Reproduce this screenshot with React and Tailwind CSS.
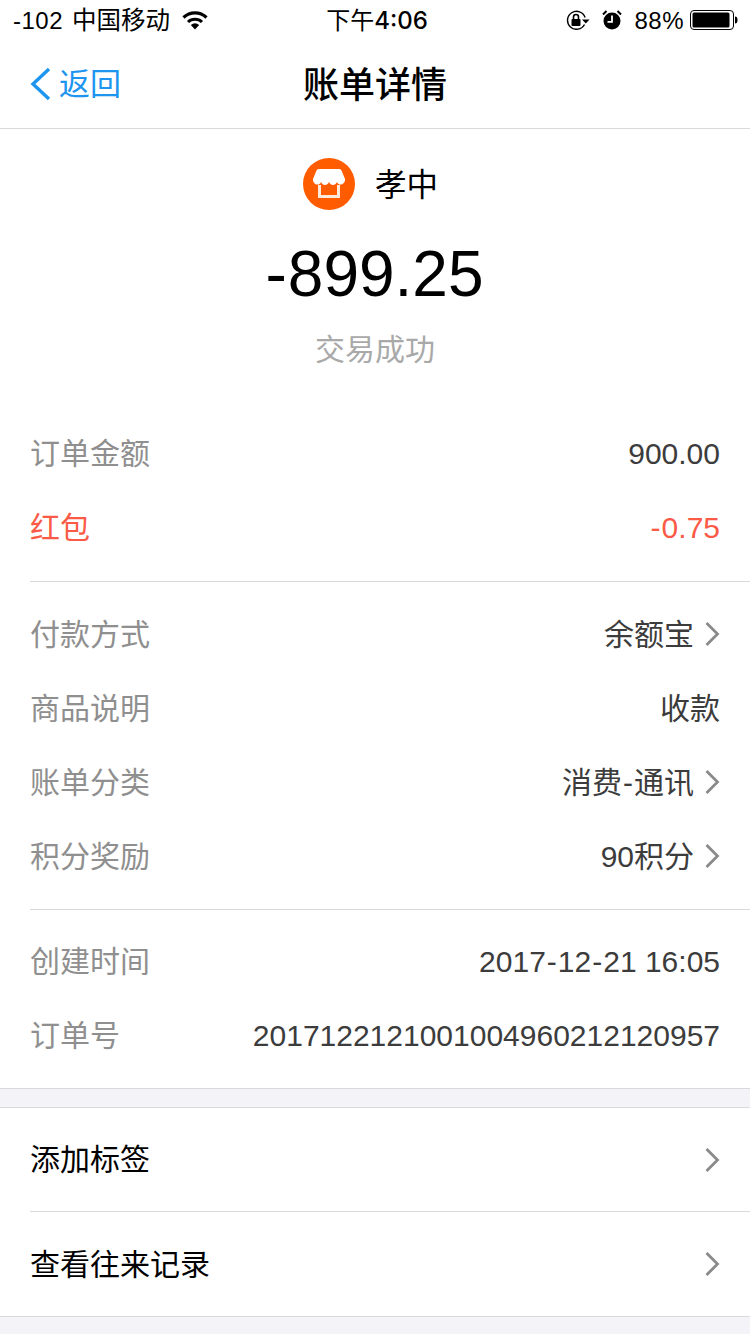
const FONT = "font-['Liberation_Sans','Noto_Sans_CJK_SC',sans-serif]";

const Arrow = () => (
  <svg width="15" height="26" viewBox="0 0 15 26" fill="none" aria-hidden="true">
    <path d="M1.500 2l11 11L1.500 24" stroke="#8a8a8a" strokeWidth="2.800" />
  </svg>
);

// the hyphen in the screenshot's font sits wider than the Liberation one
const Spaced = ({ text, gap = "mx-[1px]" }) =>
  text.split("-").map((part, i) => (
    <span key={i}>
      {i > 0 && <span className={gap}>-</span>}
      {part}
    </span>
  ));

const Row = ({ label, value, arrow, red }) => (
  <div className="flex h-[74px] items-center justify-between pr-[30px] text-[30px]">
    <span className={red ? "text-[#fb5a47]" : "text-[#8f8f8f]"}>{label}</span>
    <span className={`flex items-center gap-[11px] ${red ? "text-[#fb5a47]" : "text-[#3c3c3c]"}`}>
      <span className="whitespace-pre">
        <Spaced text={value} />
      </span>
      {arrow && <Arrow />}
    </span>
  </div>
);

const LinkRow = ({ label, className = "h-[103px]" }) => (
  <div className={`flex items-center justify-between pr-[30px] text-[30px] text-black ${className}`}>
    <span>{label}</span>
    <Arrow />
  </div>
);

const StatusBar = () => (
  <div className="flex h-[40px] items-center justify-between pl-[13px] pr-[12px] pt-[2px] text-[24px] leading-none text-black">
    <div className="flex w-[280px] items-center">
      <span className="tracking-[0.5px]">-102</span>
      <span className="ml-[9px] text-[24.500px]">中国移动</span>
      <svg width="26" height="20" viewBox="0 0 26 20" className="ml-[12px] -mt-[2px]" aria-hidden="true">
        <path d="M1.500 7.500a16.500 16.500 0 0 1 23 0" fill="none" stroke="#000" strokeWidth="3.200" />
        <path d="M6 12a10 10 0 0 1 14 0" fill="none" stroke="#000" strokeWidth="3" />
        <path d="M8.800 15a6.500 6.500 0 0 1 8.400 0L13 19.500z" fill="#000" />
      </svg>
    </div>
    <span className="flex items-center pl-[3px] text-[24px]">
      下午<span className="font-['Inter'] font-medium">4:06</span>
    </span>
    <div className="flex w-[280px] items-center justify-end">
      <svg width="24" height="20" viewBox="0 0 24 20" className="-mt-[2px]" aria-hidden="true">
        <path d="M18.500 14.500a9 9 0 1 1 .6-7" fill="none" stroke="#000" strokeWidth="1.400" />
        <path d="M16 9.500h7.500l-3.700 4z" fill="#000" />
        <rect x="5.500" y="9" width="9" height="7" rx="1" fill="#000" />
        <path d="M7.500 9V7a2.500 2.500 0 0 1 5 0v2" fill="none" stroke="#000" strokeWidth="1.600" />
      </svg>
      <svg width="20" height="20" viewBox="0 0 20 20" className="ml-[12px] -mt-[2px]" aria-hidden="true">
        <circle cx="10" cy="11" r="8.500" fill="#000" />
        <path d="M10 5.500V11.800H5.500" fill="none" stroke="#fff" strokeWidth="1.800" />
        <path d="M1 4.500L4.500 1M19 4.500L15.500 1" stroke="#000" strokeWidth="2" />
      </svg>
      <span className="ml-[12px] tracking-[0.5px]">88%</span>
      <svg width="48" height="20" viewBox="0 0 48 20" className="ml-[6px] -mt-[2px]" aria-hidden="true">
        <rect x="0.500" y="0.500" width="43" height="19" rx="3.500" fill="none" stroke="#000" />
        <rect x="2.500" y="2.500" width="37" height="15" rx="1.500" fill="#000" />
        <path d="M45 6.500c2 0 2.500 1.500 2.500 3.500s-.5 3.500-2.500 3.500z" fill="#000" />
      </svg>
    </div>
  </div>
);

export default function App() {
  return (
    <div className={`min-h-[1334px] overflow-hidden bg-[#f3f3f8] ${FONT}`}>
      <div className="border-b border-[#d9d9d9] bg-white">
        <StatusBar />
        <div className="relative flex h-[88px] items-center justify-center">
          <div className="absolute left-[30px] flex items-center text-[31px] text-[#1e96f0]">
            <svg width="22" height="34" viewBox="0 0 22 34" fill="none" aria-hidden="true">
              <path d="M19 2L3 17l16 15" stroke="#1e96f0" strokeWidth="3.400" />
            </svg>
            <span className="ml-[7px] pt-[2px]">返回</span>
          </div>
          <h1 className="pt-[4px] text-[36px] font-medium text-black">账单详情</h1>
        </div>
      </div>

      <div className="border-b border-[#d9d9d9] bg-white pb-[16px] pl-[30px]">
        <div className="-ml-[30px] flex flex-col items-center">
          <div className="mt-[29px] flex h-[52px] items-center pr-[9px]">
            <svg width="52" height="52" viewBox="0 0 52 52" aria-hidden="true">
              <circle cx="26" cy="26" r="26" fill="#ff5c00" />
              <path d="M16 11h20a2.500 2.500 0 0 1 2.500 1.500L42 21c.5 5-6 8-8 3-1.500 4-6.500 4-8 0-1.500 4-6.500 4-8 0-2 5-8.500 2-8-3l3.500-8.500A2.500 2.500 0 0 1 16 11z" fill="#fff" />
              <path d="M16.500 27v11.500h19V27" fill="none" stroke="#ffe9da" strokeWidth="3" />
            </svg>
            <span className="ml-[20px] pt-[4px] text-[31.500px] text-black">孝中</span>
          </div>
          <div className="mt-[27px] pr-[2px] text-[64px] leading-[74px] text-black">
            <Spaced text="-899.25" />
          </div>
          <div className="mt-[18px] text-[30px] leading-[42px] text-[#a9a9a9]">交易成功</div>
        </div>

        <div className="mt-[45px] border-b border-[#d9d9d9] pb-[17px]">
          <Row label="订单金额" value="900.00" />
          <Row label="红包" value="-0.75" red />
        </div>
        <div className="border-b border-[#d9d9d9] pb-[16px] pt-[15px]">
          <Row label="付款方式" value="余额宝" arrow />
          <Row label="商品说明" value="收款" />
          <Row label="账单分类" value="消费-通讯" arrow />
          <Row label="积分奖励" value="90积分" arrow />
        </div>
        <div className="pt-[14px]">
          <Row label="创建时间" value="2017-12-21 16:05" />
          <Row label="订单号" value="2017122121001004960212120957" />
        </div>
      </div>

      <div className="mt-[18px] border-y border-[#d9d9d9] bg-white pl-[30px]">
        <div className="border-b border-[#d9d9d9]">
          <LinkRow label="添加标签" />
        </div>
        <LinkRow label="查看往来记录" className="h-[104px]" />
      </div>
    </div>
  );
}
